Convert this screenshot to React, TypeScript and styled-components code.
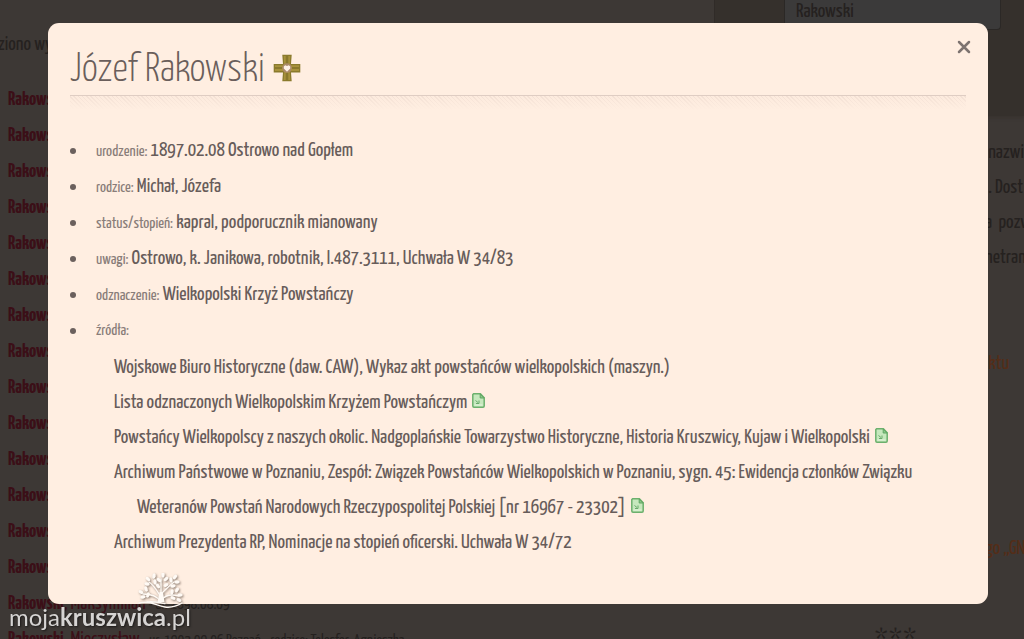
import React from "react";
import styled, { createGlobalStyle } from "styled-components";

const GlobalStyle = createGlobalStyle`
  *, *::before, *::after { box-sizing: border-box; }
  body {
    margin: 0;
    overflow: hidden;
    background: #3d3835;
    color: #25211f;
    font: 400 20px/36px "Yanone Kaffeesatz", "Roboto Condensed", sans-serif;
  }
  ul { margin: 0; padding: 0; list-style: none; }
`;

const Page = styled.div`
  display: grid;
  grid-template-columns: minmax(0, 1fr) 310px;
  height: 100vh;
  overflow: hidden;
`;

const Results = styled.main`
  padding-top: 27px;
  white-space: nowrap;
`;

const ResultCount = styled.p`
  margin: 0 0 19px -2px;
`;

const ResultList = styled.ul`
  padding-left: 8px;
`;

const Result = styled.li`
  height: 36px;
  font-size: 16px;
  line-height: 36px;
`;

const PersonLink = styled.a`
  color: #3b0f17;
  font-size: 20px;
  text-decoration: none;
`;

const Sidebar = styled.aside`
  overflow: hidden;
  white-space: nowrap;
`;

const SearchPanel = styled.form`
  height: 116px;
  padding: 0 23px 0 69px;
  background: #35302c;
  border-left: 1px solid #302b28;
  box-shadow: 0 2px 3px #38332f;
`;

const SearchInput = styled.input`
  display: block;
  width: 100%;
  height: 30px;
  padding: 0 11px 5px;
  border: 1px solid #2b2826;
  border-top: 0;
  border-radius: 0 0 4px 4px;
  background: #3b3a3a;
  color: #25211f;
  font: inherit;
`;

const Note = styled.p<{ $accent?: boolean; $gap?: number }>`
  margin: ${(p) => p.$gap ?? 0}px 0 0;
  padding-left: 271px;
  color: ${(p) => (p.$accent ? "#542d18" : "inherit")};
  line-height: 35px;
`;

const Stars = styled.p`
  margin: 54px 0 0;
  padding-left: 161px;
  font-size: 26px;
  letter-spacing: 2px;
`;

const Overlay = styled.div`
  position: fixed;
  inset: 0;
  padding: 23px 36px 0 48px;
`;

const Dialog = styled.section`
  position: relative;
  padding: 22px 22px 44px;
  border-radius: 11px;
  background: #ffeee1;
  color: #675c5a;
`;

const Title = styled.h1`
  display: flex;
  align-items: center;
  gap: 8px;
  height: 50px;
  margin: 0;
  padding-top: 2px;
  color: #6a5e5b;
  font-size: 40px;
  font-weight: 300;
  line-height: 50px;

  svg {
    margin-bottom: 6px;
  }
`;

const Divider = styled.div`
  height: 15px;
  margin-bottom: 23px;
  border-top: 1px solid #dfcdc3;
  background:
    linear-gradient(rgba(255, 238, 225, 0), #ffeee1),
    repeating-linear-gradient(45deg, #f3e0d4 0 1px, #fdebde 1px 3px);
`;

const CloseButton = styled.button`
  position: absolute;
  top: 14px;
  right: 14px;
  display: grid;
  place-items: center;
  width: 20px;
  height: 20px;
  padding: 0;
  border: 0;
  background: none;
  color: #7d7370;
  cursor: pointer;
`;

const Fact = styled.li`
  display: grid;
  grid-template-columns: 26px minmax(0, 1fr);
  grid-template-rows: 36px;
  align-items: center;

  &::before {
    content: "";
    width: 6px;
    height: 6px;
    border-radius: 50%;
    background: #6b605d;
  }
`;

const Label = styled.span`
  color: #897d79;
  font-size: 16px;
  line-height: 20px;
`;

const Sources = styled.ul`
  grid-column: 2;
  padding: 1px 0 0 18px;
`;

const Source = styled.li`
  padding-left: 23px;
  text-indent: -23px;
  line-height: 35px;
`;

const ScanLink = styled.a`
  display: inline-block;
  margin-left: 2px;
  line-height: 0;
  text-indent: 0;
`;

const Logo = styled.a`
  position: fixed;
  left: 9px;
  bottom: 7px;
  color: #d6d4d3;
  font: 400 24px/30px Lato, sans-serif;
  text-decoration: none;
  text-shadow: 1px 1px 2px #1c1a19;

  svg {
    position: absolute;
    left: 128px;
    bottom: 21px;
    filter: drop-shadow(1px 1px 1px rgba(70, 55, 45, 0.65));
  }
`;

const CrossIcon = () => (
  <svg width="28" height="28" viewBox="0 0 28 28" aria-label="Wielkopolski Krzyż Powstańczy">
    <path d="M9.300.7h9.400L18 10h9.300v8.500H18l.7 8.800H9.300l.7-8.800H.7V10H10z" fill="#8a7a2c" />
    <path d="M10.700 2h6.600l-.6 9.200H26V17h-9.300l.6 9h-6.600l.6-9H2v-5.800h9.300z" fill="#a8923c" />
    <path d="M12.700 2h2.600v8h-2.600zM12.700 19h2.600v7h-2.600zM2 13h7v2H2zM19 13h7v2h-7z" fill="#8a782c" />
    <circle cx="14" cy="14" r="4.800" fill="#ab8a68" />
    <path d="M14 17.700l-3.200-3.300v-2l1.400-1.200 1.800.8 1.800-.8 1.400 1.200v2z" fill="#fff0e6" />
  </svg>
);

const ScanIcon = () => (
  <svg width="13" height="15" viewBox="0 0 13 15">
    <path d="M1.600.8h6.800l3.800 4v8.200a1.200 1.200 0 0 1-1.200 1.200H2A1.200 1.200 0 0 1 .8 13V1.600z" fill="#c6e8bd" stroke="#6cb06d" strokeWidth="1.500" />
    <path d="M8.200 1v4h4L8.200 1z" fill="#8bc888" stroke="#5fa563" />
    <path d="M2.500 12h8" stroke="#e5f6df" />
    <path d="M3.500 7.500l2.500 2M7 7.500v3H4" fill="none" stroke="#69aa6b" />
  </svg>
);

const CloseIcon = () => (
  <svg width="14" height="14" viewBox="0 0 14 14">
    <path d="M2 2l10 10M12 2L2 12" stroke="currentColor" strokeWidth="2.500" strokeLinecap="round" />
  </svg>
);

const leaves: [number, number, number][] = [
  [4, 19, 30], [9, 16, 70], [6, 24, -10], [11, 22, 110],
  [11, 6, 40], [17, 3, 100], [10, 11, 10], [18, 9, 80],
  [22, 7, 40], [26, 2, 90], [29, 6, -40], [21, 13, 50], [29, 12, -30],
  [34, 7, 80], [38, 4, -50], [40, 9, 0], [36, 13, -10],
  [35, 19, 100], [40, 17, -60], [43, 22, 0], [36, 25, 20], [42, 27, 30],
];

const TreeIcon = () => (
  <svg width="48" height="38" viewBox="0 0 48 38">
    <g fill="none" stroke="#fffaf5" strokeLinecap="round">
      <path d="M24 28V6M23 28C20 23 14 21 6 21M25 27c3-5 9-6 17-4M24 24C20 18 17 12 12 9M24 21c4-4 8-8 13-12" strokeWidth="1.300" />
      <path d="M22.500 19h3.500l1.500 10h-7z" fill="#fffaf5" stroke="none" />
      <path d="M2 30c12-3 17 3 26 4 7 1 12-1 17-4M10 29c8-1 13 1 18 1.500" strokeWidth="1.400" />
    </g>
    {leaves.map(([x, y, turn]) => (
      <ellipse key={`${x}-${y}`} cx={x} cy={y} rx="2.700" ry="1.700" fill="#fffaf5" transform={`rotate(${turn} ${x} ${y})`} />
    ))}
  </svg>
);

const facts = [
  ["urodzenie:", "1897.02.08 Ostrowo nad Gopłem"],
  ["rodzice:", "Michał, Józefa"],
  ["status/stopień:", "kapral, podporucznik mianowany"],
  ["uwagi:", "Ostrowo, k. Janikowa, robotnik, I.487.3111, Uchwała W 34/83"],
  ["odznaczenie:", "Wielkopolski Krzyż Powstańczy"],
];

const sources = [
  { text: "Wojskowe Biuro Historyczne (daw. CAW), Wykaz akt powstańców wielkopolskich (maszyn.)" },
  { text: "Lista odznaczonych Wielkopolskim Krzyżem Powstańczym", scan: true },
  {
    text: "Powstańcy Wielkopolscy z naszych okolic. Nadgoplańskie Towarzystwo Historyczne, Historia Kruszwicy, Kujaw i Wielkopolski",
    scan: true,
  },
  {
    text: "Archiwum Państwowe w Poznaniu, Zespół: Związek Powstańców Wielkopolskich w Poznaniu, sygn. 45: Ewidencja członków Związku Weteranów Powstań Narodowych Rzeczypospolitej Polskiej [nr 16967 - 23302]",
    scan: true,
  },
  { text: "Archiwum Prezydenta RP, Nominacje na stopień oficerski. Uchwała W 34/72" },
];

const results: { first?: string; info?: string }[] = [
  ...Array.from({ length: 14 }, () => ({})),
  { first: ", Maksymilian", info: " - ur. 1898.08.09" },
  { first: ", Mieczysław", info: " - ur. 1902.09.06 Poznań - rodzice: Telesfor, Agnieszka" },
];

export default function App() {
  return (
    <>
      <GlobalStyle />
      <Page>
        <Results>
          <ResultCount>ziono wy</ResultCount>
          <ResultList>
            {results.map((r, i) => (
              <Result key={i}>
                <PersonLink href="#"><b>Rakowski</b>{r.first}</PersonLink>
                {r.info}
              </Result>
            ))}
          </ResultList>
        </Results>
        <Sidebar>
          <SearchPanel>
            <SearchInput aria-label="Nazwisko" defaultValue="Rakowski" />
          </SearchPanel>
          <Note $gap={19}>&nbsp;nazwi</Note>
          <Note>&nbsp;. Dost</Note>
          <Note>a&nbsp; pozw</Note>
          <Note>netran</Note>
          <Note $accent $gap={71}>&nbsp;ktu</Note>
          <Note $accent $gap={150}>go „GN</Note>
          <Stars>***</Stars>
        </Sidebar>
      </Page>
      <Overlay>
        <Dialog role="dialog" aria-labelledby="person-name">
          <Title id="person-name">Józef Rakowski <CrossIcon /></Title>
          <Divider />
          <ul>
            {facts.map(([label, value]) => (
              <Fact key={label}>
                <span><Label>{label}</Label> {value}</span>
              </Fact>
            ))}
            <Fact>
              <Label>źródła:</Label>
              <Sources>
                {sources.map((s) => (
                  <Source key={s.text}>
                    {s.text}
                    {s.scan && <> <ScanLink href="#" aria-label="Skan"><ScanIcon /></ScanLink></>}
                  </Source>
                ))}
              </Sources>
            </Fact>
          </ul>
          <CloseButton type="button" aria-label="Zamknij"><CloseIcon /></CloseButton>
        </Dialog>
      </Overlay>
      <Logo href="#">
        <TreeIcon />
        moja<b>kruszwica</b>.pl
      </Logo>
    </>
  );
}
